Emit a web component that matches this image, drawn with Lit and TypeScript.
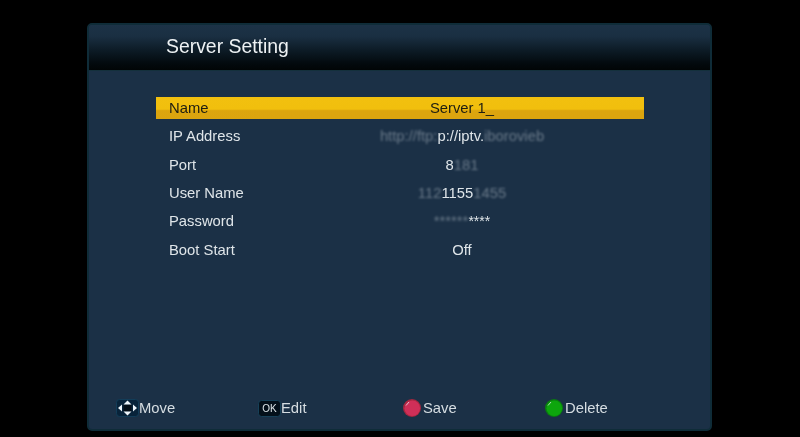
import { LitElement, html, css } from "lit";
import { customElement } from "lit/decorators.js";

type Row = { label: string; before?: string; value: string; after?: string; active?: boolean; stars?: boolean };

const rows: Row[] = [
  { label: "Name", value: "Server 1_", active: true },
  { label: "IP Address", before: "http://ftp:", value: "p://iptv.", after: "iborovieb" },
  { label: "Port", value: "8", after: "181" },
  { label: "User Name", before: "112", value: "1155", after: "1455" },
  { label: "Password", before: "******", value: "****", stars: true },
  { label: "Boot Start", value: "Off" },
];

@customElement("app-root")
export class AppRoot extends LitElement {
  static styles = css`
    :host {
      display: block;
      width: 800px;
      height: 437px;
      background: #000;
      overflow: hidden;
      font-family: "Liberation Sans", Arial, sans-serif;
      box-sizing: border-box;
      padding: 23px 88px 6px 87px;
    }
    .panel {
      height: 408px;
      box-sizing: border-box;
      background: #1b3046;
      border: 2px solid #0f2c38;
      border-radius: 5px;
      display: flex;
      flex-direction: column;
      overflow: hidden;
      filter: blur(0.35px);
    }
    .header {
      height: 46px;
      flex: none;
      background: linear-gradient(#1c3246 0%, #1a2f42 25%, #0d1c27 55%, #030a0e 85%, #010506 100%);
      border-bottom: 1px solid #14303c;
      display: flex;
      align-items: center;
      padding: 0 0 2px 77px;
      box-sizing: border-box;
      font-size: 19.4px;
      color: #eef2f4;
    }
    .list {
      margin: 26px 0 0 67px;
      width: 488px;
      flex: 1;
    }
    .row {
      display: grid;
      grid-template-columns: 171px 244px;
      align-items: center;
      height: 28.4px;
      padding-left: 13px;
      font-size: 14.8px;
      color: #dfe5e9;
    }
    .row.active {
      height: 22px;
      margin-bottom: 3px;
      background: linear-gradient(#f2c00f 0%, #f1bf0d 55%, #dca50e 62%, #dba40f 100%);
      color: #1d1d12;
    }
    .value {
      text-align: center;
      white-space: nowrap;
    }
    .ghost {
      color: #c4ced6;
      opacity: 0.45;
      filter: blur(0.8px);
      display: inline-block;
    }
    .stars {
      font-size: 14px;
    }
    .footer {
      display: grid;
      grid-template-columns: 142px 145px 142px 100px;
      padding: 0 0 11px 27px;
      font-size: 14.8px;
      color: #d6dde2;
    }
    .key {
      display: flex;
      align-items: center;
      height: 20px;
    }
    .key svg {
      flex: none;
      display: block;
    }
    .dot {
      margin-right: 2px;
    }
  `;

  private dot(fill: string, rim: string) {
    return html`<svg class="dot" width="18" height="18" viewBox="0 0 18 18">
      <circle cx="9" cy="9" r="9" fill="${rim}" />
      <circle cx="9.3" cy="9.3" r="7.8" fill="${fill}" />
      <path d="M3 6.5L6 3" stroke="#e8eef0" stroke-width="1" opacity="0.75" />
    </svg>`;
  }

  render() {
    return html`<div class="panel">
      <div class="header">Server Setting</div>
      <div class="list">
        ${rows.map(
          (r) => html`<div class="row ${r.active ? "active" : ""}">
            <span>${r.label}</span>
            <span class="value"
              >${r.before ? html`<span class="ghost">${r.before}</span>` : ""}<span class="${r.stars ? "stars" : ""}"
                >${r.value}</span
              >${r.after ? html`<span class="ghost">${r.after}</span>` : ""}</span
            >
          </div>`
        )}
      </div>
      <div class="footer">
        <div class="key">
          <svg width="23" height="18" viewBox="0 0 23 18">
            <rect x="0.5" y="0.5" width="22" height="17" rx="3" fill="#08233a" stroke="#123c58" />
            <rect x="7.5" y="5.5" width="8" height="7" fill="#030d16" />
            <path d="M11.5 1.5l4 4h-8zM11.5 16.5l4-4h-8zM2 9l4-3.5v7zM21 9l-4-3.5v7z" fill="#eef5fa" />
          </svg>
          Move
        </div>
        <div class="key">
          <svg width="23" height="17" viewBox="0 0 23 17">
            <rect x="0.5" y="0.5" width="22" height="16" rx="3" fill="#04101a" stroke="#164058" />
            <text x="11.5" y="12" text-anchor="middle" font-size="10" fill="#dfe6ea" font-family="Liberation Sans">OK</text>
          </svg>
          Edit
        </div>
        <div class="key">${this.dot("#cf2f58", "#a5273f")}Save</div>
        <div class="key">${this.dot("#0da60d", "#0a7d10")}Delete</div>
      </div>
    </div>`;
  }
}
